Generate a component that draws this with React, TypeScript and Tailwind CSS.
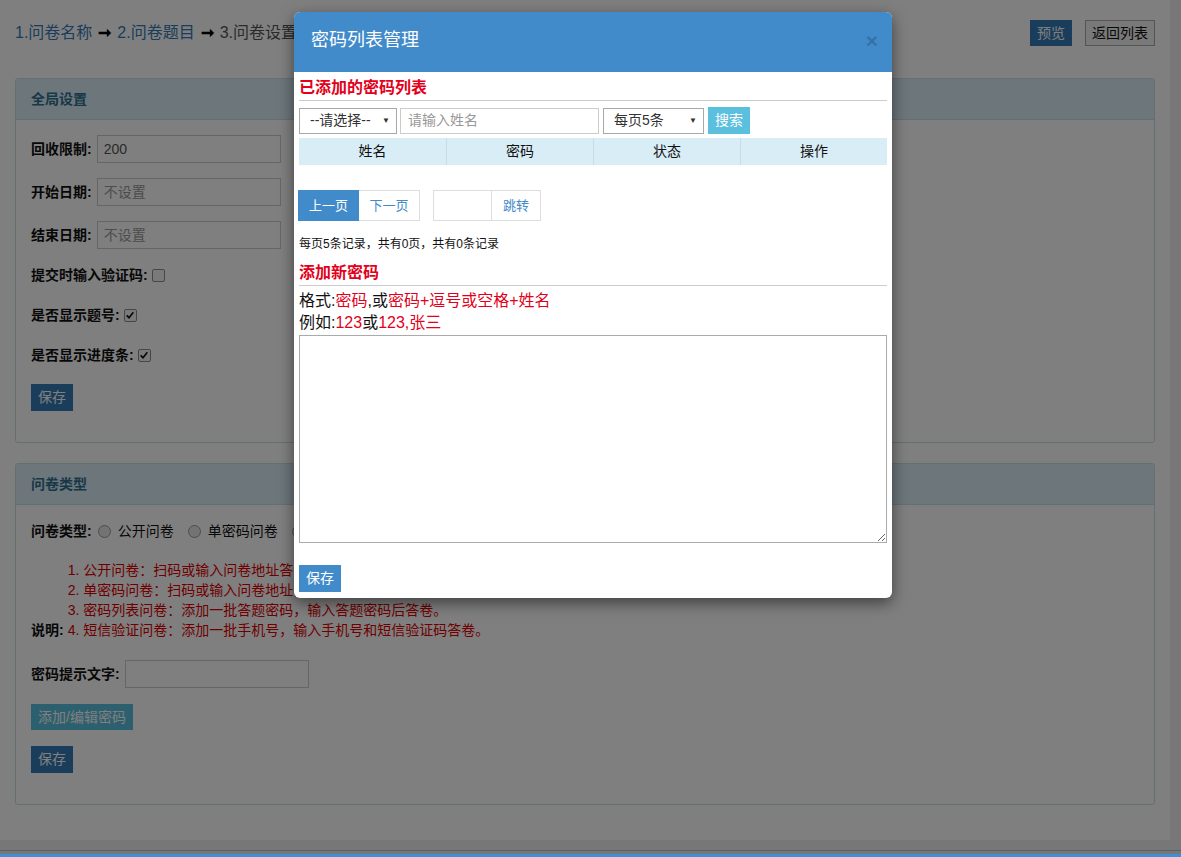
import React from 'react'

const font = { fontFamily: '"Liberation Sans", "Noto Sans CJK SC", sans-serif' }

function Check({ checked = false }: { checked?: boolean }) {
  return (
    <span className="ml-[4px] inline-flex h-[13px] w-[13px] items-center justify-center rounded-[2px] border border-[#8f8f8f] bg-[#f4f4f4]">
      {checked && (
        <svg viewBox="0 0 12 12" className="h-[10px] w-[10px]">
          <path d="M2 6.5 L4.8 9.2 L10 2.8" fill="none" stroke="#111" strokeWidth="2" />
        </svg>
      )}
    </span>
  )
}

function Radio() {
  return <span className="inline-block h-[13px] w-[13px] rounded-full border border-[#9a9a9a] bg-[#e6e6e6]" />
}

function Field({ label, value, placeholder }: { label: string; value?: string; placeholder?: string }) {
  return (
    <div className="mb-[15px] flex h-[28px] items-center">
      <span className="font-bold text-[#111]">{label}</span>
      <div className="ml-[5px] flex h-[28px] w-[184px] items-center border border-[#ccc] bg-white px-[6px]">
        {value ? <span className="text-[#555]">{value}</span> : <span className="text-[#999]">{placeholder}</span>}
      </div>
    </div>
  )
}

function Panel({ title, children }: { title: string; children: React.ReactNode }) {
  return (
    <div className="rounded-[3px] border border-[#c4dfe6] bg-white">
      <div className="flex h-[41px] items-center border-b border-[#c4dfe6] bg-[#d9edf7] px-[15px] text-[14px] font-bold text-[#31708f]">
        {title}
      </div>
      {children}
    </div>
  )
}

function FakeSelect({ text, width }: { text: string; width: string }) {
  return (
    <div className={`flex h-[26px] items-center justify-between border border-[#a9a9a9] bg-white pl-[10px] pr-[6px] text-[14px] text-[#333] ${width}`}>
      <span>{text}</span>
      <span className="text-[8px] text-[#333]">▼</span>
    </div>
  )
}

function Modal() {
  return (
    <div className="absolute left-[294px] top-[12px] z-20 w-[598px] rounded-[6px] bg-white shadow-[0_5px_15px_rgba(0,0,0,0.5)]">
      <div className="flex h-[60px] items-center justify-between rounded-t-[6px] bg-[#428bca] pb-[4px] pl-[17px] pr-[14px]">
        <span className="text-[18px] text-white">密码列表管理</span>
        <span className="text-[21px] font-bold leading-none text-black/20">×</span>
      </div>
      <div className="px-[5px] pb-[6px]">
        <div className="mt-[5px] border-b border-[#ccc] pb-[1px] text-[16px] font-bold leading-[22px] text-[#e3001b]">
          已添加的密码列表
        </div>
        <div className="mt-[6px] flex items-center">
          <FakeSelect text="--请选择--" width="w-[98px]" />
          <div className="ml-[3px] flex h-[26px] w-[199px] items-center border border-[#ccc] px-[7px] text-[14px] text-[#999]">
            请输入姓名
          </div>
          <div className="ml-[4px]">
            <FakeSelect text="每页5条" width="w-[101px]" />
          </div>
          <div className="ml-[4px] flex h-[27px] w-[42px] items-center justify-center bg-[#5bc0de] text-[14px] text-white">
            搜索
          </div>
        </div>
        <div className="mt-[4px] grid h-[27px] grid-cols-4 bg-[#d9edf7] text-[14px] text-[#111]">
          {['姓名', '密码', '状态', '操作'].map((h, i) => (
            <div key={h} className={`flex items-center justify-center ${i > 0 ? 'border-l border-[#c6dce8]' : ''}`}>
              {h}
            </div>
          ))}
        </div>
        <div className="-ml-[1px] mt-[25px] flex items-center text-[13px]">
          <div className="flex h-[31px] w-[61px] items-center justify-center bg-[#428bca] text-white">上一页</div>
          <div className="flex h-[31px] w-[61px] items-center justify-center border border-l-0 border-[#ddd] text-[#428bca]">下一页</div>
          <div className="ml-[13px] h-[31px] w-[59px] border border-[#ddd]" />
          <div className="flex h-[31px] w-[49px] items-center justify-center border border-l-0 border-[#ddd] text-[#428bca]">跳转</div>
        </div>
        <div className="mt-[14px] text-[12px] leading-[18px] text-[#111]">每页5条记录，共有0页，共有0条记录</div>
        <div className="mt-[9px] border-b border-[#ccc] pb-[1px] text-[16px] font-bold leading-[22px] text-[#e3001b]">
          添加新密码
        </div>
        <div className="mt-[4px] text-[16px] leading-[22px] text-[#111]">
          格式:<span className="text-[#e3001b]">密码</span>,或<span className="text-[#e3001b]">密码+逗号或空格+姓名</span>
        </div>
        <div className="text-[16px] leading-[22px] text-[#111]">
          例如:<span className="text-[#e3001b]">123</span>或<span className="text-[#e3001b]">123,张三</span>
        </div>
        <textarea
          readOnly
          className="mt-[1px] block h-[208px] w-[588px] border border-[#aaa] outline-none"
        />
        <div className="mt-[22px] flex h-[27px] w-[42px] items-center justify-center bg-[#428bca] text-[14px] text-white">
          保存
        </div>
      </div>
    </div>
  )
}

export default function App() {
  return (
    <div className="relative h-[857px] w-[1181px] overflow-hidden bg-[#eeeeee] text-[14px]" style={font}>
      <div className="h-[840px] w-[1170px] bg-white px-[15px] pt-[20px]">
        <div className="flex items-start justify-between">
          <div className="mt-[1px] text-[16px] leading-[24px]">
            <span className="text-[#337ab7]">1.问卷名称</span>
            <span className="mx-[6px] font-bold text-black">➞</span>
            <span className="text-[#337ab7]">2.问卷题目</span>
            <span className="mx-[6px] font-bold text-black">➞</span>
            <span className="text-[#555]">3.问卷设置</span>
          </div>
          <div className="flex items-center">
            <div className="flex h-[26px] w-[42px] items-center justify-center bg-[#337ab7] text-white">预览</div>
            <div className="ml-[13px] flex h-[26px] w-[70px] items-center justify-center border border-[#aaa] bg-[#f2f2f2] text-[#111]">
              返回列表
            </div>
          </div>
        </div>

        <div className="mt-[32px]">
          <Panel title="全局设置">
            <div className="px-[15px] pb-[31px] pt-[15px]">
              <Field label="回收限制:" value="200" />
              <Field label="开始日期:" placeholder="不设置" />
              <Field label="结束日期:" placeholder="不设置" />
              <div className="mb-[18px] flex h-[22px] items-center font-bold text-[#111]">
                提交时输入验证码:<Check />
              </div>
              <div className="mb-[18px] flex h-[22px] items-center font-bold text-[#111]">
                是否显示题号:<Check checked />
              </div>
              <div className="mb-[18px] flex h-[22px] items-center font-bold text-[#111]">
                是否显示进度条:<Check checked />
              </div>
              <div className="flex h-[27px] w-[42px] items-center justify-center bg-[#337ab7] text-white">保存</div>
            </div>
          </Panel>
        </div>

        <div className="mt-[20px]">
          <Panel title="问卷类型">
            <div className="px-[15px] pb-[31px] pt-[15px]">
              <div className="flex h-[22px] items-center text-[#111]">
                <span className="font-bold">问卷类型:</span>
                <span className="ml-[6px] flex items-center gap-[7px]"><Radio />公开问卷</span>
                <span className="ml-[14px] flex items-center gap-[7px]"><Radio />单密码问卷</span>
                <span className="ml-[14px] flex items-center gap-[7px]"><Radio />密码列表问卷</span>
                <span className="ml-[14px] flex items-center gap-[7px]"><Radio />短信验证问卷</span>
              </div>
              <div className="mt-[18px] flex items-end leading-[20px]">
                <span className="font-bold text-[#111]">说明:</span>
                <div className="ml-[4px] text-[#e00000]">
                  <div>1. 公开问卷：扫码或输入问卷地址答卷。</div>
                  <div>2. 单密码问卷：扫码或输入问卷地址，输入答题密码后答卷。</div>
                  <div>3. 密码列表问卷：添加一批答题密码，输入答题密码后答卷。</div>
                  <div>4. 短信验证问卷：添加一批手机号，输入手机号和短信验证码答卷。</div>
                </div>
              </div>
              <div className="mt-[20px] flex h-[28px] items-center">
                <span className="font-bold text-[#111]">密码提示文字:</span>
                <div className="ml-[5px] h-[28px] w-[184px] border border-[#ccc] bg-white" />
              </div>
              <div className="mt-[16px] flex h-[26px] w-[102px] items-center justify-center bg-[#5bc0de] text-white">
                添加/编辑密码
              </div>
              <div className="mt-[16px] flex h-[27px] w-[42px] items-center justify-center bg-[#337ab7] text-white">保存</div>
            </div>
          </Panel>
        </div>
      </div>
      <div className="mt-[10px] h-[1px] w-full bg-[#a9c3dc]" />

      <div className="absolute inset-0 z-10 bg-black/50" />
      <div className="absolute bottom-0 left-0 z-20 h-[3px] w-full bg-[#3d8fd6]" />
      <Modal />
    </div>
  )
}
